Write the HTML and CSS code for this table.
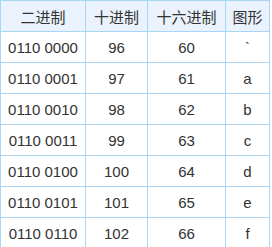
FILE: index.html
```html
<!DOCTYPE html>
<html>
<head>
<meta charset="utf-8">
<link rel="stylesheet" href="styles.css">
</head>
<body>
<table class="ascii">
<colgroup><col class="c1"><col class="c2"><col class="c3"><col class="c4"></colgroup>
<thead>
<tr><th>二进制</th><th>十进制</th><th>十六进制</th><th>图形</th></tr>
</thead>
<tbody>
<tr><td>0110 0000</td><td>96</td><td>60</td><td>`</td></tr>
<tr><td>0110 0001</td><td>97</td><td>61</td><td>a</td></tr>
<tr><td>0110 0010</td><td>98</td><td>62</td><td>b</td></tr>
<tr><td>0110 0011</td><td>99</td><td>63</td><td>c</td></tr>
<tr><td>0110 0100</td><td>100</td><td>64</td><td>d</td></tr>
<tr><td>0110 0101</td><td>101</td><td>65</td><td>e</td></tr>
<tr><td>0110 0110</td><td>102</td><td>66</td><td>f</td></tr>
</tbody>
</table>
</body>
</html>
```
FILE: styles.css
```css
html, body {
  margin: 0;
  padding: 0;
  background: #fff;
}
.ascii {
  border-collapse: collapse;
  table-layout: fixed;
  width: 270px;
  font-family: "Liberation Sans", "Noto Sans CJK SC", sans-serif;
  font-size: 15px;
  color: #333;
}
.c1 { width: 85px; }
.c2 { width: 62px; }
.c3 { width: 78px; }
.c4 { width: 44px; }
.ascii th, .ascii td {
  border: 1px solid #a9d5f7;
  height: 30px;
  padding: 0;
  text-align: center;
  vertical-align: middle;
  font-weight: normal;
  white-space: nowrap;
}
.ascii th {
  background: #eaf3fd;
}
```
